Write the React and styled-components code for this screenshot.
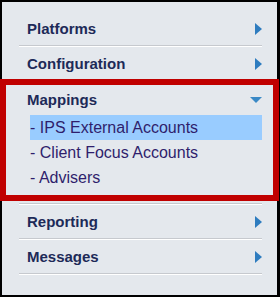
import styled, { createGlobalStyle } from "styled-components";

const GlobalStyle = createGlobalStyle`
    html, body {
        margin: 0;
        padding: 0;
        background: #000;
    }
    body {
        font-family: "Liberation Sans", Arial, sans-serif;
    }
`;

const Panel = styled.div`
    width: 280px;
    height: 297px;
    box-sizing: border-box;
    background: #E4E8ED;
    border-style: solid;
    border-color: #000;
    border-width: 2px 3px 2px 2px;
    padding: 10px 0 0 17px;
`;

const Menu = styled.div`
    width: 243px;
    display: flex;
    flex-direction: column;
`;

const Row = styled.div`
    height: 33px;
    display: flex;
    align-items: center;
    justify-content: space-between;
    padding-left: 8px;
    border-bottom: 1px solid #C6C9CE;
    box-shadow: 0 1px 0 #FFFFFF;
    margin-bottom: 1px;
    font-size: 15px;
    font-weight: bold;
    color: #1D2A58;
    cursor: pointer;
`;

const Section = styled.div`
    position: relative;
    padding-bottom: 13px;
    border-bottom: 1px solid #C6C9CE;
    box-shadow: 0 1px 0 #FFFFFF;
    margin-bottom: 1px;

    &::after {
        content: "";
        position: absolute;
        top: -3px;
        left: -19px;
        right: -17px;
        bottom: 2px;
        border: 6px solid #C00000;
        pointer-events: none;
    }
`;

const SectionHeader = styled.div`
    height: 32px;
    padding: 1px 0 0 8px;
    display: flex;
    align-items: center;
    justify-content: space-between;
    font-size: 15px;
    font-weight: bold;
    color: #1D2A58;
`;

const SubItem = styled.div`
    height: 25px;
    line-height: 25px;
    margin-left: 11px;
    font-size: 16px;
    color: #2F1E6C;
    background: ${props => props.active ? "#99CCFF" : "transparent"};
    white-space: nowrap;
`;

const ArrowRight = styled.span`
    width: 0;
    height: 0;
    border-top: 6px solid transparent;
    border-bottom: 6px solid transparent;
    border-left: 7px solid #2E7CBF;
`;

const ArrowDown = styled.span`
    width: 0;
    height: 0;
    margin-top: 2px;
    border-left: 6.5px solid transparent;
    border-right: 6.5px solid transparent;
    border-top: 6px solid #3A89C6;
`;

function MenuRow({ label }) {
    return (
        <Row>
            <span>{label}</span>
            <ArrowRight />
        </Row>
    );
}

export default function App() {
    const subItems = ["IPS External Accounts", "Client Focus Accounts", "Advisers"];

    return (
        <>
            <GlobalStyle />
            <Panel>
                <Menu>
                    <MenuRow label="Platforms" />
                    <MenuRow label="Configuration" />
                    <Section>
                        <SectionHeader>
                            <span>Mappings</span>
                            <ArrowDown />
                        </SectionHeader>
                        {subItems.map((item, i) => (
                            <SubItem key={item} active={i === 0}>- {item}</SubItem>
                        ))}
                    </Section>
                    <MenuRow label="Reporting" />
                    <MenuRow label="Messages" />
                </Menu>
            </Panel>
        </>
    );
}
